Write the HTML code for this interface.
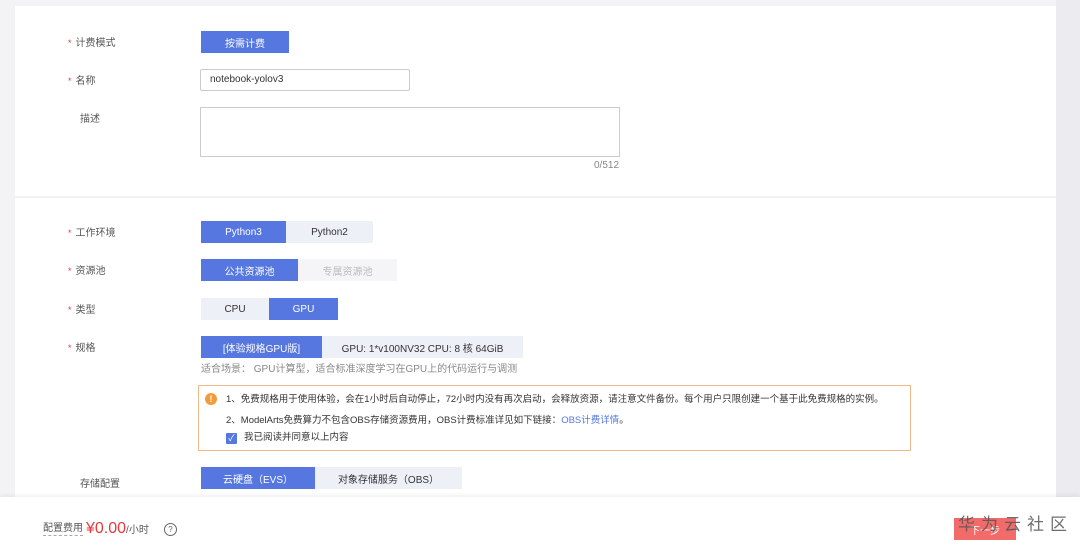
<!DOCTYPE html><html><head><meta charset="utf-8"><style>
body{margin:0;width:1080px;height:553px;overflow:hidden;background:#f3f3f5;font-family:"Liberation Sans","Noto Sans CJK SC",sans-serif;font-size:10px;color:#333;position:relative}
.rgt{position:absolute;left:1056px;top:0;width:24px;height:553px;background:#ececf0}
.card{position:absolute;left:15px;width:1041px;background:#fff}
.ab{position:absolute;line-height:1.2}
.lbl{position:absolute;left:68px;font-size:10px;color:#555;line-height:12px}
.lbl i{color:#e4393c;font-style:normal;margin-right:4px;font-size:9px}
.btn{position:absolute;height:22px;display:flex;align-items:center;justify-content:center;font-size:10px}
.on{background:#5677e0;color:#fff}
.off{background:#eef0f8;color:#333}
.dis{background:#f5f5f7;color:#bbb}
</style></head><body>
<div class="rgt"></div>
<div class="card" style="top:6px;height:190px"></div>
<div class="card" style="top:198px;height:300px"></div>

<div class="lbl" style="top:37px"><i>*</i>计费模式</div>
<div class="btn on" style="left:201px;top:31px;width:88px">按需计费</div>
<div class="lbl" style="top:75px"><i>*</i>名称</div>
<div class="ab" style="left:200px;top:69px;width:210px;height:22px;border:1px solid #ccc;border-radius:2px;display:flex;align-items:center;padding-left:9px;box-sizing:border-box">notebook-yolov3</div>
<div class="lbl" style="top:114px;left:80px">描述</div>
<div class="ab" style="left:200px;top:107px;width:420px;height:50px;border:1px solid #ccc;box-sizing:border-box"></div>
<div class="ab" style="left:594px;top:160px;color:#888">0/512</div>

<div class="lbl" style="top:227px"><i>*</i>工作环境</div>
<div class="btn on" style="left:201px;top:221px;width:85px">Python3</div>
<div class="btn off" style="left:286px;top:221px;width:87px">Python2</div>
<div class="lbl" style="top:265px"><i>*</i>资源池</div>
<div class="btn on" style="left:201px;top:259px;width:97px">公共资源池</div>
<div class="btn dis" style="left:298px;top:259px;width:99px">专属资源池</div>
<div class="lbl" style="top:304px"><i>*</i>类型</div>
<div class="btn off" style="left:201px;top:298px;width:68px">CPU</div>
<div class="btn on" style="left:269px;top:298px;width:69px">GPU</div>
<div class="lbl" style="top:342px"><i>*</i>规格</div>
<div class="btn on" style="left:201px;top:336px;width:121px">[体验规格GPU版]</div>
<div class="btn off" style="left:322px;top:336px;width:201px">GPU: 1*v100NV32 CPU: 8 核 64GiB</div>
<div class="ab" style="left:201px;top:364px;color:#888">适合场景： GPU计算型，适合标准深度学习在GPU上的代码运行与调测</div>

<div class="ab" style="left:198px;top:385px;width:713px;height:66px;border:1px solid #f0b98a;box-sizing:border-box"></div>
<div class="ab" style="left:205px;top:393px;width:12px;height:12px;border-radius:50%;background:#f39b3a;color:#fff;font-size:9px;text-align:center;line-height:12px;font-weight:bold">!</div>
<div class="ab" style="left:226px;top:394px;font-size:9.5px">1、免费规格用于使用体验，会在1小时后自动停止，72小时内没有再次启动，会释放资源，请注意文件备份。每个用户只限创建一个基于此免费规格的实例。</div>
<div class="ab" style="left:226px;top:415px;font-size:9.5px">2、ModelArts免费算力不包含OBS存储资源费用，OBS计费标准详见如下链接：<span style="color:#5677e0">OBS计费详情</span>。</div>
<div class="ab" style="left:226px;top:433px;width:11px;height:11px;background:#5677e0;border-radius:1px;color:#fff;font-size:9px;line-height:11px;text-align:center">✓</div>
<div class="ab" style="left:244px;top:432px;font-size:9.5px">我已阅读并同意以上内容</div>

<div class="lbl" style="top:479px;left:80px">存储配置</div>
<div class="btn on" style="left:201px;top:467px;width:114px">云硬盘（EVS）</div>
<div class="btn off" style="left:315px;top:467px;width:147px">对象存储服务（OBS）</div>

<div class="ab" style="left:0;top:497px;width:1080px;height:56px;background:#fff;box-shadow:0 -2px 4px rgba(0,0,0,.06)"></div>
<div class="ab" style="left:43px;top:523px;font-size:10px;color:#555;border-bottom:1px dashed #aaa">配置费用</div>
<div class="ab" style="left:86px;top:519px;font-size:16px;color:#e4393c">¥0.00<span style="font-size:10px;color:#555">/小时</span></div>
<div class="ab" style="left:164px;top:523px;width:11px;height:11px;border:1px solid #666;border-radius:50%;font-size:8px;line-height:11px;text-align:center;color:#666">?</div>
<div class="btn" style="left:954px;top:518px;width:62px;height:22px;background:#f26b6b;color:#fff">下一步</div>
<div class="ab" style="left:958px;top:515px;font-size:17px;color:#555;letter-spacing:6px;opacity:.85">华为云社区</div>
</body></html>
